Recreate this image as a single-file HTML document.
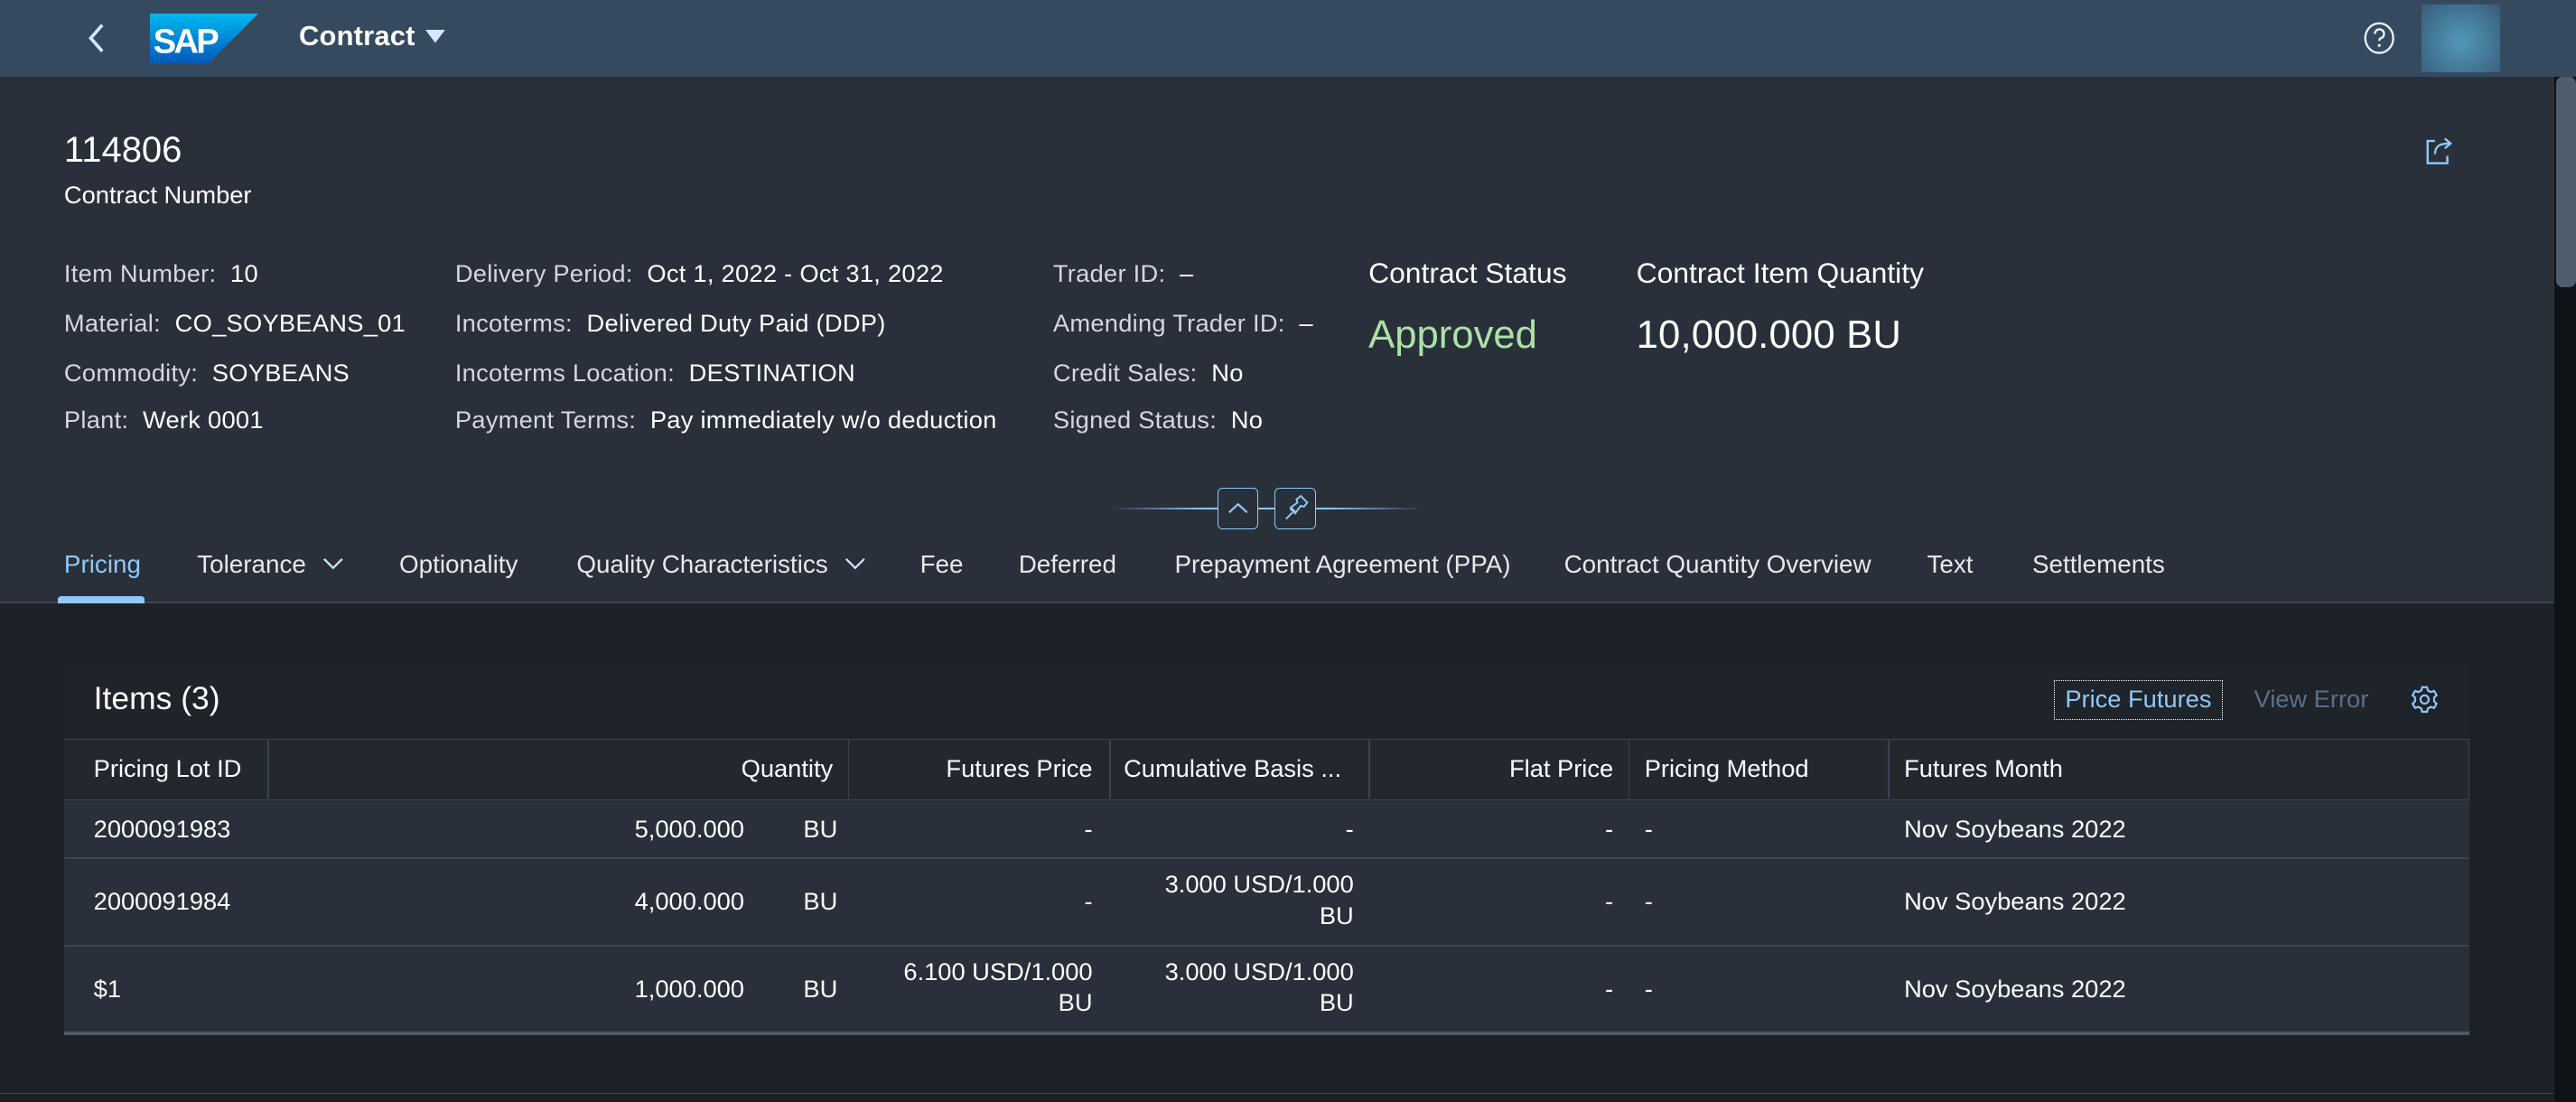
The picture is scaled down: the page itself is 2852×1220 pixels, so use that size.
<!DOCTYPE html>
<html><head><meta charset="utf-8"><style>
*{margin:0;padding:0;box-sizing:border-box}
html,body{width:2852px;height:1220px;overflow:hidden;background:#1d2026}
#r{zoom:1.81888;width:1568px;height:671px;position:relative;font-family:"Liberation Sans",sans-serif;color:#fff;font-size:15px;letter-spacing:0.15px}
.a{position:absolute;white-space:nowrap}
.l{color:#d3d8de}
.tab{position:absolute;top:335px;color:#e6e9ec;font-size:15.3px;letter-spacing:0}
.th,.td{position:absolute;white-space:nowrap;font-size:15px;letter-spacing:0}
.r{text-align:right}
</style></head><body><div id="r">
<!-- shell -->
<div class="a" style="left:0;top:0;width:1568px;height:47px;background:#354a5f"></div>
<svg class="a" style="left:52px;top:13px" width="14" height="20"><path d="M10 2 L3 10 L10 18" stroke="#d1e8ff" stroke-width="2" fill="none"/></svg>
<svg class="a" style="left:91px;top:8px" width="66" height="31"><defs><linearGradient id="g" x1="0" y1="0" x2="0" y2="1"><stop offset="0" stop-color="#00b8f1"/><stop offset="1" stop-color="#0057b8"/></linearGradient></defs><path d="M0 0H66L35 31H0Z" fill="url(#g)"/><text x="2" y="24" font-family="Liberation Sans" font-weight="bold" font-size="21" fill="#fff" letter-spacing="-1.5">SAP</text></svg>
<div class="a" style="left:182px;top:12px;font-size:17px;font-weight:bold;color:#fff;letter-spacing:0.1px">Contract</div>
<svg class="a" style="left:259px;top:18px" width="12" height="9"><path d="M0 0H12L6 8Z" fill="#d1e8ff"/></svg>
<svg class="a" style="left:1438px;top:13px" width="20" height="20"><ellipse cx="10" cy="10" rx="8.5" ry="9" stroke="#e6f0fa" stroke-width="1.3" fill="none"/><path d="M7.3 7.5a2.8 2.8 0 1 1 3.6 2.6c-.7.3-.9.8-.9 1.6" stroke="#e6f0fa" stroke-width="1.3" fill="none"/><circle cx="10" cy="14.5" r=".9" fill="#e6f0fa"/></svg>
<div class="a" style="left:1474px;top:3px;width:48px;height:41px;background:radial-gradient(circle at 50% 55%,#5298b8,#3f6f8c 70%,#3a5a74)"></div>
<!-- header -->
<div class="a" style="left:0;top:47px;width:1555px;height:320px;background:#29303a"></div>
<div class="a" style="left:1555px;top:47px;width:13px;height:624px;background:#0f1216"></div>
<div class="a" style="left:1556px;top:47px;width:12px;height:128px;background:#4f5d6e;border-radius:4px"></div>
<div class="a" style="left:39px;top:79px;font-size:22px;letter-spacing:0">114806</div>
<div class="a" style="left:39px;top:110px;font-size:15px;letter-spacing:0">Contract Number</div>
<svg class="a" style="left:1476px;top:81px" width="20" height="20"><path d="M6 5H1.5V18.5H13.5V14" stroke="#91c8f6" stroke-width="1.3" fill="none"/><path d="M6 13C6 8 9 6.5 15 6.5M12 3.5L15.5 6.5L12 9.5" stroke="#91c8f6" stroke-width="1.3" fill="none"/></svg>
<div class="a" style="left:39px;top:158px"><span class="l">Item Number:</span>&nbsp; 10</div>
<div class="a" style="left:39px;top:188px"><span class="l">Material:</span>&nbsp; CO_SOYBEANS_01</div>
<div class="a" style="left:39px;top:218px"><span class="l">Commodity:</span>&nbsp; SOYBEANS</div>
<div class="a" style="left:39px;top:247px"><span class="l">Plant:</span>&nbsp; Werk 0001</div>
<div class="a" style="left:277px;top:158px"><span class="l">Delivery Period:</span>&nbsp; Oct 1, 2022 - Oct 31, 2022</div>
<div class="a" style="left:277px;top:188px"><span class="l">Incoterms:</span>&nbsp; Delivered Duty Paid (DDP)</div>
<div class="a" style="left:277px;top:218px"><span class="l">Incoterms Location:</span>&nbsp; DESTINATION</div>
<div class="a" style="left:277px;top:247px"><span class="l">Payment Terms:</span>&nbsp; Pay immediately w/o deduction</div>
<div class="a" style="left:641px;top:158px"><span class="l">Trader ID:</span>&nbsp; –</div>
<div class="a" style="left:641px;top:188px"><span class="l">Amending Trader ID:</span>&nbsp; –</div>
<div class="a" style="left:641px;top:218px"><span class="l">Credit Sales:</span>&nbsp; No</div>
<div class="a" style="left:641px;top:247px"><span class="l">Signed Status:</span>&nbsp; No</div>
<div class="a" style="left:833px;top:156px;font-size:17.5px;letter-spacing:0">Contract Status</div>
<div class="a" style="left:833px;top:190px;font-size:24px;color:#abe2a5;letter-spacing:0">Approved</div>
<div class="a" style="left:996px;top:156px;font-size:17.5px;letter-spacing:0">Contract Item Quantity</div>
<div class="a" style="left:996px;top:190px;font-size:24px;letter-spacing:0.1px">10,000.000 BU</div>
<div class="a" style="left:676px;top:309px;width:190px;height:1px;background:linear-gradient(90deg,transparent,#91c8f6 30%,#91c8f6 70%,transparent)"></div>
<div class="a" style="left:741px;top:297px;width:25px;height:25px;border:1px solid #91c8f6;border-radius:3px;background:#29303a"></div>
<div class="a" style="left:776px;top:297px;width:25px;height:25px;border:1px solid #91c8f6;border-radius:3px;background:#29303a"></div>
<svg class="a" style="left:741px;top:297px" width="25" height="25"><path d="M7 15L12.5 10L18 15" stroke="#91c8f6" stroke-width="1.2" fill="none"/></svg>
<svg class="a" style="left:776px;top:297px" width="25" height="25"><path d="M7 19L11 15M9.5 12.5L13 16M10 12L14 9L13.5 7L16 5L20 9L18 11.5L16 11L13 15Z" stroke="#91c8f6" stroke-width="1.1" fill="none"/></svg>
<!-- tabs -->
<div class="tab" style="left:39px;color:#91c8f6">Pricing</div>
<div class="tab" style="left:120px">Tolerance</div>
<svg class="a" style="left:196px;top:339px" width="13" height="8"><path d="M1 1L6.5 6.5L12 1" stroke="#d1e8ff" stroke-width="1.2" fill="none"/></svg>
<div class="tab" style="left:243px">Optionality</div>
<div class="tab" style="left:351px">Quality Characteristics</div>
<svg class="a" style="left:514px;top:339px" width="13" height="8"><path d="M1 1L6.5 6.5L12 1" stroke="#d1e8ff" stroke-width="1.2" fill="none"/></svg>
<div class="tab" style="left:560px">Fee</div>
<div class="tab" style="left:620px">Deferred</div>
<div class="tab" style="left:715px">Prepayment Agreement (PPA)</div>
<div class="tab" style="left:952px">Contract Quantity Overview</div>
<div class="tab" style="left:1173px">Text</div>
<div class="tab" style="left:1237px">Settlements</div>
<div class="a" style="left:0;top:366px;width:1555px;height:1px;background:#3a4552"></div>
<div class="a" style="left:35px;top:363px;width:53px;height:4px;background:#91c8f6;border-radius:2px 2px 0 0"></div>
<!-- panel -->
<div class="a" style="left:39px;top:404px;width:1464px;height:226px;background:#1f232a"></div>
<div class="a" style="left:57px;top:414px;font-size:19.5px;letter-spacing:0">Items (3)</div>
<div class="a" style="left:1250px;top:414px;width:103px;height:24px;border:1px dotted #fff"></div>
<div class="a" style="left:1257px;top:417px;color:#91c8f6;font-size:15px;letter-spacing:0">Price Futures</div>
<div class="a" style="left:1372px;top:417px;color:#5b7185;font-size:15px;letter-spacing:0">View Error</div>
<svg class="a" style="left:1467px;top:417px" width="18" height="18"><circle cx="9" cy="9" r="2.5" stroke="#91c8f6" stroke-width="1.2" fill="none"/><path d="M7.5 1.5h3l.5 2 1.8 1 2-.7 1.5 2.6-1.5 1.4v2.4l1.5 1.4-1.5 2.6-2-.7-1.8 1-.5 2h-3l-.5-2-1.8-1-2 .7-1.5-2.6 1.5-1.4V7.8L1.7 6.4l1.5-2.6 2 .7 1.8-1z" stroke="#91c8f6" stroke-width="1.2" fill="none"/></svg>
<div class="a" style="left:39px;top:450px;width:1464px;height:37px;background:#23282f;border-top:1px solid #3b4552;border-bottom:1px solid #3b4552;border-right:1px solid #3b4552"></div>
<div class="a" style="left:163px;top:451px;width:1px;height:35px;background:#3b4552"></div>
<div class="a" style="left:516px;top:451px;width:1px;height:35px;background:#3b4552"></div>
<div class="a" style="left:675px;top:451px;width:1px;height:35px;background:#3b4552"></div>
<div class="a" style="left:833px;top:451px;width:1px;height:35px;background:#3b4552"></div>
<div class="a" style="left:991px;top:451px;width:1px;height:35px;background:#3b4552"></div>
<div class="a" style="left:1149px;top:451px;width:1px;height:35px;background:#3b4552"></div>
<div class="a" style="left:39px;top:487px;width:1464px;height:142px;background:#29303a"></div>
<div class="a" style="left:39px;top:522px;width:1464px;height:1px;background:#3b4552"></div>
<div class="a" style="left:39px;top:575px;width:1464px;height:1px;background:#3b4552"></div>
<div class="a" style="left:39px;top:628px;width:1464px;height:2px;background:#4d5969"></div>
<div class="th" style="left:57px;top:459px">Pricing Lot ID</div>
<div class="th r" style="right:1061px;top:459px">Quantity</div>
<div class="th r" style="right:903px;top:459px">Futures Price</div>
<div class="th" style="left:684px;top:459px">Cumulative Basis ...</div>
<div class="th r" style="right:586px;top:459px">Flat Price</div>
<div class="th" style="left:1001px;top:459px">Pricing Method</div>
<div class="th" style="left:1159px;top:459px">Futures Month</div>
<!-- rows -->
<div class="td" style="left:57px;top:496px">2000091983</div>
<div class="td r" style="right:1115px;top:496px">5,000.000</div>
<div class="td" style="left:489px;top:496px">BU</div>
<div class="td r" style="right:903px;top:496px">-</div>
<div class="td r" style="right:744px;top:496px">-</div>
<div class="td r" style="right:586px;top:496px">-</div>
<div class="td" style="left:1001px;top:496px">-</div>
<div class="td" style="left:1159px;top:496px">Nov Soybeans 2022</div>

<div class="td" style="left:57px;top:540px">2000091984</div>
<div class="td r" style="right:1115px;top:540px">4,000.000</div>
<div class="td" style="left:489px;top:540px">BU</div>
<div class="td r" style="right:903px;top:540px">-</div>
<div class="td r" style="right:744px;top:529px;line-height:19px">3.000 USD/1.000<br>BU</div>
<div class="td r" style="right:586px;top:540px">-</div>
<div class="td" style="left:1001px;top:540px">-</div>
<div class="td" style="left:1159px;top:540px">Nov Soybeans 2022</div>

<div class="td" style="left:57px;top:593px">$1</div>
<div class="td r" style="right:1115px;top:593px">1,000.000</div>
<div class="td" style="left:489px;top:593px">BU</div>
<div class="td r" style="right:903px;top:582px;line-height:19px">6.100 USD/1.000<br>BU</div>
<div class="td r" style="right:744px;top:582px;line-height:19px">3.000 USD/1.000<br>BU</div>
<div class="td r" style="right:586px;top:593px">-</div>
<div class="td" style="left:1001px;top:593px">-</div>
<div class="td" style="left:1159px;top:593px">Nov Soybeans 2022</div>

<div class="a" style="left:0;top:665px;width:1555px;height:1px;background:#3a4552"></div>
</div></body></html>
